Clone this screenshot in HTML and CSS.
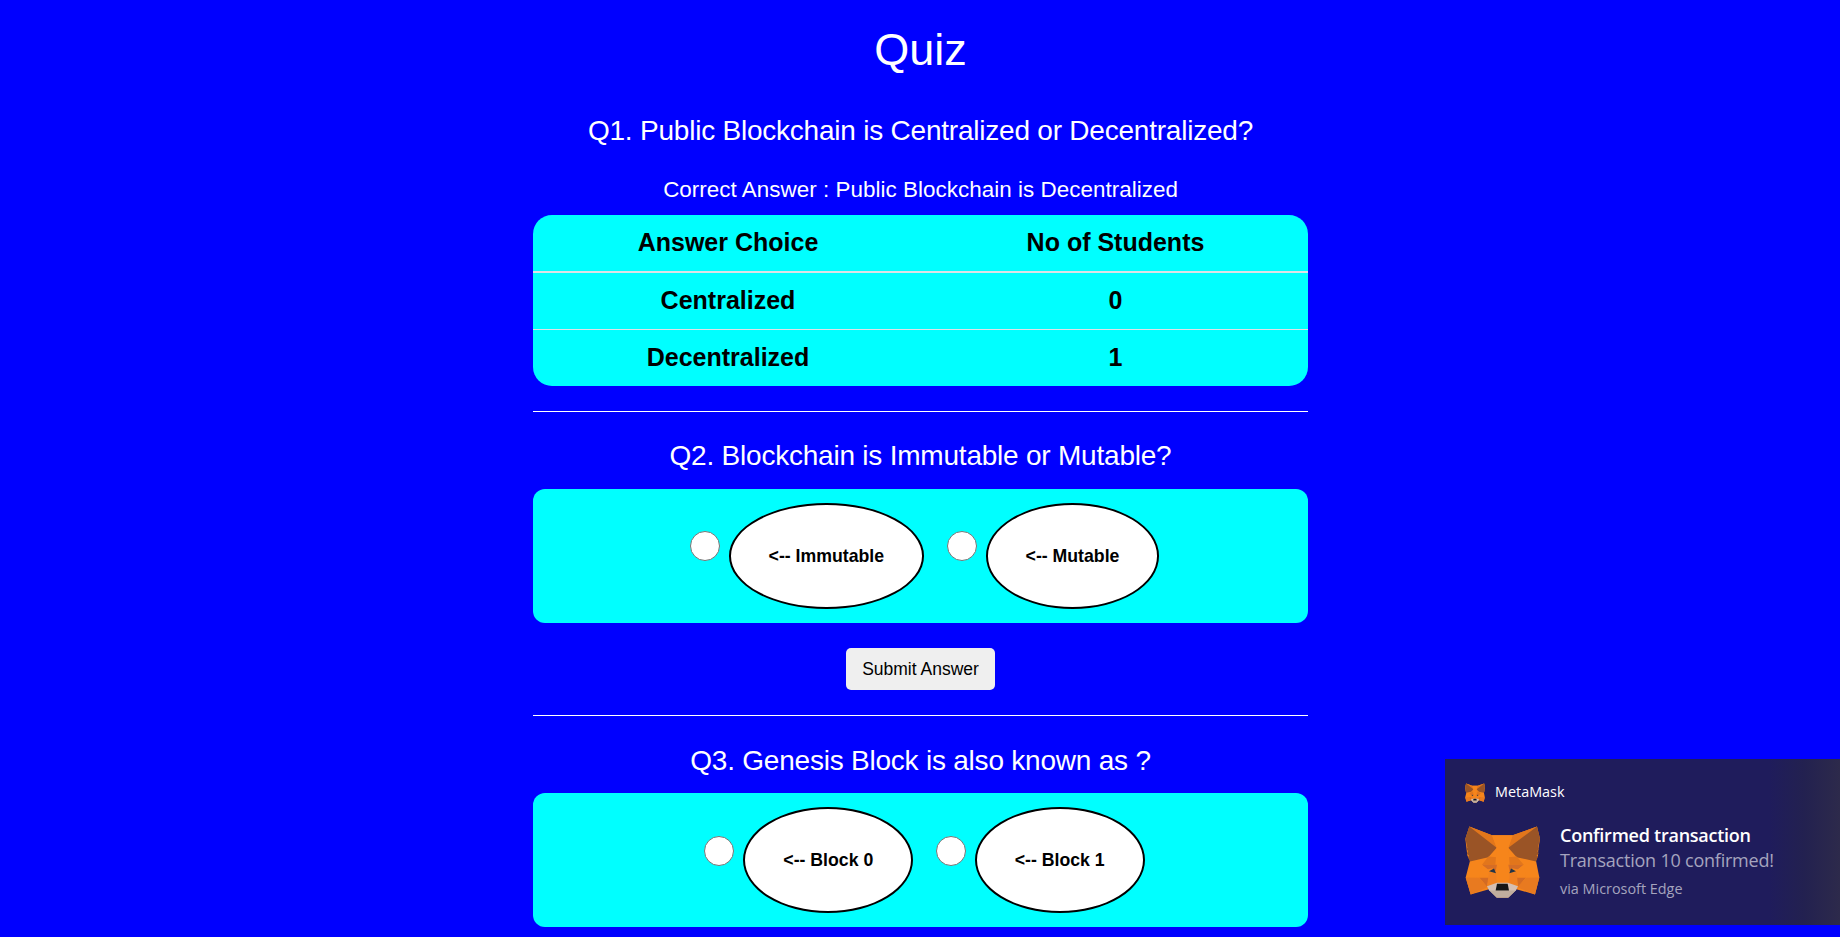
FILE: index.html
```
<!DOCTYPE html>
<html lang="en">
<head>
<meta charset="utf-8">
<title>Quiz</title>
<link rel="stylesheet" href="styles.css">
</head>
<body>
<main class="quiz">
  <h1 class="title">Quiz</h1>

  <section class="question">
    <h2 class="prompt prompt-first">Q1. Public Blockchain is Centralized or Decentralized?</h2>
    <p class="correct">Correct Answer : Public Blockchain is Decentralized</p>
    <div class="results">
      <div class="row row-head"><span>Answer Choice</span><span>No of Students</span></div>
      <div class="row"><span>Centralized</span><span>0</span></div>
      <div class="row"><span>Decentralized</span><span>1</span></div>
    </div>
  </section>
  <hr class="divider">

  <section class="question">
    <h2 class="prompt">Q2. Blockchain is Immutable or Mutable?</h2>
    <div class="options">
      <label class="option"><input class="radio" type="radio" name="q2"><span class="bubble">&lt;-- Immutable</span></label>
      <label class="option"><input class="radio" type="radio" name="q2"><span class="bubble">&lt;-- Mutable</span></label>
    </div>
    <button class="submit" type="button">Submit Answer</button>
  </section>
  <hr class="divider">

  <section class="question">
    <h2 class="prompt prompt-low">Q3. Genesis Block is also known as ?</h2>
    <div class="options options-low">
      <label class="option"><input class="radio" type="radio" name="q3"><span class="bubble">&lt;-- Block 0</span></label>
      <label class="option"><input class="radio" type="radio" name="q3"><span class="bubble">&lt;-- Block 1</span></label>
    </div>
  </section>
</main>

<aside class="toast">
  <div class="toast-app">
    <svg class="fox-small" viewBox="45 169 225 215"><use href="#fox"/></svg>
    <span>MetaMask</span>
  </div>
  <div class="toast-main">
    <svg class="fox" viewBox="45 169 225 215">
      <g id="fox">
        <path fill="#f6851b" d="M58 170 126 196H188L261 170 270 207 265 238 264 257 258 273 268 323 255 374 199 358 175 383H140L117 358 62 374 47 323 60 273 52 257 46 207z"/>
        <path fill="#e2761b" d="M58 170 126 196 140 234 107 215zM261 170 188 196 175 234 210 215z"/>
        <path fill="#9a5426" d="M58 170 140 234 115 262 60 275 54 262 57 257 51 252 54 243 50 240 52 233 46 207zM261 170 175 234 200 262 258 275 263 262 260 257 266 252 262 243 267 240 264 233 270 207z"/>
        <path fill="#e2761b" d="M96 285 115 260 141 262V285zM221 285 200 260 175 262V285z"/>
        <path fill="#f6851b" d="M126 196H188L175 234 181 312 177 341H139L134 312 140 234z"/>
        <path fill="#d56d25" d="M96 285H141L137 304 127 295 112 299zM221 285H175L179 304 189 295 204 299z"/>
        <path fill="#e87a20" d="M47 323 87 324 113 352 62 374zM268 323 229 324 201 352 255 374z"/>
        <path fill="#d36b24" d="M88 323H117L111 350zM228 323H199L204 350z"/>
        <path fill="#f6851b" d="M96 285 117 301 117 323H88zM221 285 200 301V323H228z"/>
        <path fill="#f08020" d="M117 306 138 311 141 341 111 350zM200 306 179 311 175 341 204 350z"/>
        <path fill="#d5bfb2" d="M111 349 141 339H174L204 349 198 361 175 383H140L117 361z"/>
        <path fill="#c0ad9e" d="M119 362H197L175 383H140z"/>
        <path fill="#233447" d="M117 304 132 296 138 310zM198 304 183 296 178 310z"/>
        <path fill="#161616" d="M141 342H173L177 362H137z"/>
      </g>
    </svg>
    <div class="toast-text">
      <strong class="toast-title">Confirmed transaction</strong>
      <span class="toast-body">Transaction 10 confirmed!</span>
      <span class="toast-via">via Microsoft Edge</span>
    </div>
  </div>
</aside>
</body>
</html>
```
FILE: styles.css
```
* { box-sizing: border-box; }

body {
  margin: 0;
  height: 937px;
  overflow: hidden;
  background: #00f;
  color: #fff;
  font-family: "Liberation Sans", Arial, sans-serif;
}

.quiz {
  width: 775px;
  margin-left: 533px;
  text-align: center;
}

.title {
  margin: 0;
  font-size: 45px;
  font-weight: 400;
  line-height: 99px;
}

.question {
  display: flex;
  flex-direction: column;
}

.prompt {
  margin: 27px 0 16px;
  font-size: 28px;
  font-weight: 400;
  line-height: 34px;
  letter-spacing: -0.22px;
}

.prompt-first { margin: 15px 0 29px; }
.prompt-low { margin: 28px 0 15px; }

.correct {
  margin: 0 0 12px;
  font-size: 22.4px;
  line-height: 26px;
  letter-spacing: 0.04px;
}

.results {
  overflow: hidden;
  border-radius: 19px;
  background: #0ff;
  color: #000;
  font-size: 25px;
  font-weight: 700;
  line-height: 55px;
}

.row {
  display: grid;
  grid-template-columns: 390px 385px;
  height: 56px;
}

.row + .row + .row {
  height: 57px;
  border-top: 1px solid #dee2e6;
}

.row-head {
  height: 58px;
  border-bottom: 2px solid #dee2e6;
}

.divider {
  height: 1px;
  margin: 25px 0 0;
  border: 0;
  background: #fff;
}

.options {
  display: flex;
  justify-content: center;
  gap: 22.5px;
  height: 134px;
  padding: 14px 0 0 8px;
  border-radius: 12px;
  background: #0ff;
}

.option {
  display: flex;
  align-items: flex-start;
  gap: 9px;
}

.radio {
  appearance: none;
  width: 30px;
  height: 30px;
  margin: 28px 0 0;
  border: 1px solid #767676;
  border-radius: 50%;
  background: #fff;
}

.options-low .radio { margin-top: 29px; }

.bubble {
  height: 106px;
  padding: 0 38px;
  border: 2px solid #000;
  border-radius: 50%;
  background: #fff;
  color: #000;
  font-size: 17.7px;
  font-weight: 700;
  line-height: 102px;
  white-space: nowrap;
}

.submit {
  align-self: center;
  width: 149px;
  height: 42px;
  margin-top: 25px;
  padding: 0;
  border: 0;
  border-radius: 5px;
  background: #efefef;
  color: #000;
  font: 17.5px/42px "Liberation Sans", Arial, sans-serif;
}

.toast {
  position: absolute;
  top: 759px;
  right: 0;
  width: 395px;
  height: 166px;
  padding: 24px 20px 0;
  background: linear-gradient(90deg, #1f1c5c 0, #1f1c5c 82%, #232150 91%, #2d2a4b 100%);
  font-family: "Open Sans", "Noto Sans", sans-serif;
}

.toast-app {
  display: flex;
  align-items: center;
  gap: 10px;
  height: 20px;
  font-size: 14.4px;
  line-height: 18px;
}

.toast-app span { margin-bottom: 2px; }

.fox-small { width: 20px; height: 20px; }

.toast-main {
  display: flex;
  gap: 20px;
  margin-top: 19px;
}

.fox {
  width: 75px;
  height: 72px;
  margin-top: 4px;
}

.toast-text {
  display: flex;
  flex-direction: column;
  white-space: nowrap;
}

.toast-title {
  font-size: 18px;
  font-weight: 600;
  line-height: 26px;
  letter-spacing: -0.25px;
}

.toast-body {
  color: #a5a4be;
  font-size: 18px;
  line-height: 25px;
  letter-spacing: -0.22px;
}

.toast-via {
  margin-top: 5px;
  color: #a5a4be;
  font-size: 14.4px;
  line-height: 22px;
}
```
